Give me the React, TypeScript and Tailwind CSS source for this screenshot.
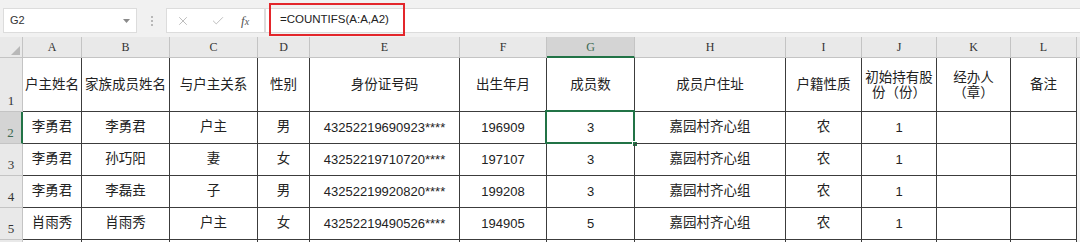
import { X, Check } from "lucide-react";

const COLS = ["A", "B", "C", "D", "E", "F", "G", "H", "I", "J", "K", "L"];

const HEADERS: React.ReactNode[] = [
  "户主姓名",
  "家族成员姓名",
  "与户主关系",
  "性别",
  "身份证号码",
  "出生年月",
  "成员数",
  "成员户住址",
  "户籍性质",
  <>
    初始持有股
    <br />
    份（份）
  </>,
  <>
    经办人
    <br />
    （章）
  </>,
  "备注",
];

const ROWS = [
  ["李勇君", "李勇君", "户主", "男", "43252219690923****", "196909", "3", "嘉园村齐心组", "农", "1", "", ""],
  ["李勇君", "孙巧阳", "妻", "女", "43252219710720****", "197107", "3", "嘉园村齐心组", "农", "1", "", ""],
  ["李勇君", "李磊垚", "子", "男", "43252219920820****", "199208", "3", "嘉园村齐心组", "农", "1", "", ""],
  ["肖雨秀", "肖雨秀", "户主", "女", "43252219490526****", "194905", "5", "嘉园村齐心组", "农", "1", "", ""],
];

const gridCols =
  "grid grid-cols-[23px_59px_88px_88px_52px_150px_87px_88px_151px_76px_75px_74px_66px_1fr]";

const cellFont = { fontFamily: '"Liberation Sans", "Noto Sans CJK SC", sans-serif' };
const headFont = { fontFamily: '"Liberation Serif", "Noto Sans CJK SC", serif' };

function Toolbar() {
  return (
    <div className="h-[37px] bg-[#f1f1f1] flex items-start pt-[8px]" style={cellFont}>
      {/* Name box */}
      <div className="ml-[3px] w-[134px] h-[25px] bg-white border border-[#dcdcdc] flex items-center justify-between pl-[6px] pr-[6px]">
        <span className="text-[11px] text-[#333]">G2</span>
        <svg width="7" height="4" viewBox="0 0 7 4">
          <path d="M0 0 L7 0 L3.5 4 Z" fill="#8a8a8a" />
        </svg>
      </div>
      {/* Separator dots */}
      <div className="w-[29px] h-[25px] flex flex-col items-center justify-center gap-[2px]">
        <span className="w-[2px] h-[2px] bg-[#b8b8b8]" />
        <span className="w-[2px] h-[2px] bg-[#b8b8b8]" />
        <span className="w-[2px] h-[2px] bg-[#b8b8b8]" />
      </div>
      {/* Cancel / Enter / fx */}
      <div className="w-[99px] h-[25px] bg-white border border-[#dcdcdc] flex items-center pl-[9px]">
        <X size={14} strokeWidth={1.5} className="text-[#b4b4b4]" />
        <Check size={14} strokeWidth={1.5} className="text-[#b4b4b4] ml-[21px]" />
        <span className="ml-[16px] text-[13px] italic text-[#555]" style={headFont}>
          f<span className="text-[10px]">x</span>
        </span>
      </div>
      {/* Formula bar */}
      <div className="flex-1 h-[25px] bg-white border border-[#dcdcdc] border-r-0 relative">
        <div className="absolute left-[3px] top-[-6px] w-[136px] h-[33px] border-2 border-[#e3262b] flex items-center pl-[9px]">
          <span className="text-[11.5px] text-[#222]">=COUNTIFS(A:A,A2)</span>
        </div>
      </div>
    </div>
  );
}

function ColumnHeader() {
  return (
    <div className={`${gridCols} h-[21px] bg-[#e9e9e9]`} style={headFont}>
      <div className="border-r border-b border-[#c4c4c4] flex items-end justify-end p-[2px]">
        <svg width="9" height="9" viewBox="0 0 9 9">
          <path d="M9 0 L9 9 L0 9 Z" fill="#b8b8b8" />
        </svg>
      </div>
      {COLS.map((c) =>
        c === "G" ? (
          <div
            key={c}
            className="bg-[#d4d4d4] border-r border-[#c4c4c4] border-b-2 border-b-[#217346] flex items-center justify-center text-[12px] text-[#3d6a52]"
          >
            {c}
          </div>
        ) : (
          <div
            key={c}
            className="border-r border-b border-[#c4c4c4] flex items-center justify-center text-[12px] text-[#333]"
          >
            {c}
          </div>
        )
      )}
      <div className="border-b border-[#c4c4c4]" />
    </div>
  );
}

function RowNumber({ label, selected }: { label: string; selected?: boolean }) {
  return (
    <div
      className={
        selected
          ? "bg-[#d4d4d4] border-b border-[#c4c4c4] border-r-2 border-r-[#217346] flex items-end justify-center pb-[1px] text-[13px] text-[#3d6a52]"
          : "bg-[#e9e9e9] border-r border-b border-[#c4c4c4] flex items-end justify-center pb-[1px] text-[13px] text-[#333]"
      }
      style={headFont}
    >
      {label}
    </div>
  );
}

function HeaderRow() {
  return (
    <div className={`${gridCols} h-[54px]`}>
      <RowNumber label="1" />
      {HEADERS.map((h, i) => (
        <div
          key={i}
          className="border-r border-b border-[#3c3c3c] flex items-center justify-center text-center text-[13.5px] leading-[15px] text-[#222] whitespace-nowrap"
          style={cellFont}
        >
          {h}
        </div>
      ))}
      <div className="bg-[#f6f6f6]" />
    </div>
  );
}

function DataRow({ n, cells, label }: { n: number; cells: string[]; label: string }) {
  return (
    <div className={`${gridCols} h-[32px]`}>
      <RowNumber label={label} selected={n === 2} />
      {cells.map((v, i) => {
        const isCjk = /[\u4e00-\u9fff]/.test(v);
        const selected = n === 2 && i === 6;
        return (
          <div
            key={i}
            className={`relative border-r border-b border-[#3c3c3c] flex items-center justify-center whitespace-nowrap text-[#222] ${
              isCjk ? "text-[13.5px]" : "text-[13px]"
            }`}
            style={cellFont}
          >
            {v}
            {selected && (
              <div className="absolute top-[-2px] left-[-2px] right-[-1px] bottom-[-1px] border-2 border-[#217346]">
                <div className="absolute right-[-5px] bottom-[-5px] w-[6px] h-[6px] bg-[#217346] border border-white" />
              </div>
            )}
          </div>
        );
      })}
      <div className="bg-[#f6f6f6]" />
    </div>
  );
}

export default function App() {
  return (
    <div className="w-[1080px] h-[242px] overflow-hidden bg-white">
      <Toolbar />
      <ColumnHeader />
      <HeaderRow />
      {ROWS.map((r, i) => (
        <DataRow key={i} n={i + 2} label={String(i + 2)} cells={r} />
      ))}
      {/* next row, only its top edge is visible */}
      <DataRow n={6} label="" cells={["", "", "", "", "", "", "", "", "", "", "", ""]} />
    </div>
  );
}
